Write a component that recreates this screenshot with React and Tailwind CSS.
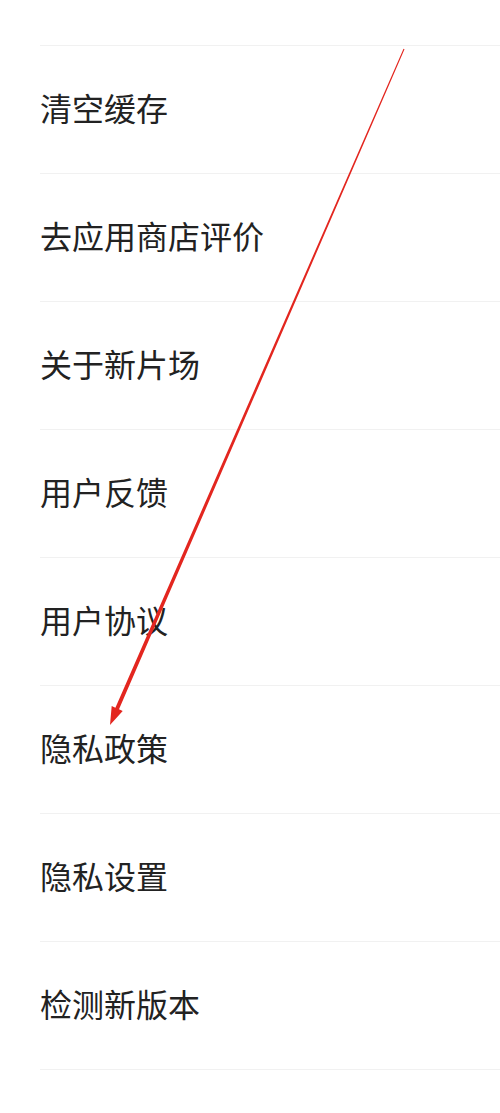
import React from "react";

const items = [
  "清空缓存",
  "去应用商店评价",
  "关于新片场",
  "用户反馈",
  "用户协议",
  "隐私政策",
  "隐私设置",
  "检测新版本",
];

const Arrow = () => (
  <svg
    className="absolute left-0 top-0 pointer-events-none"
    width="500"
    height="1113"
    viewBox="0 0 500 1113"
  >
    <polygon
      points="403.5,48.8 404.5,49.2 119,709.3 122.7,710.9 110,725 111.7,706.1 115.4,707.7"
      fill="#e3261f"
    />
  </svg>
);

export default function App() {
  return (
    <div
      className="relative w-[500px] h-[1113px] bg-white overflow-hidden"
      style={{ fontFamily: '"Noto Sans CJK SC", "Noto Sans", sans-serif' }}
    >
      <div className="h-[45px]" />
      <div className="ml-[40px] border-b border-[#f1f1f1]">
        {items.map((title, index) => (
          <div
            key={index}
            className="h-[128px] pb-[5px] border-t border-[#f1f1f1] flex items-center text-[32px] text-[#222222]"
          >
            {title}
          </div>
        ))}
      </div>
      <Arrow />
    </div>
  );
}
